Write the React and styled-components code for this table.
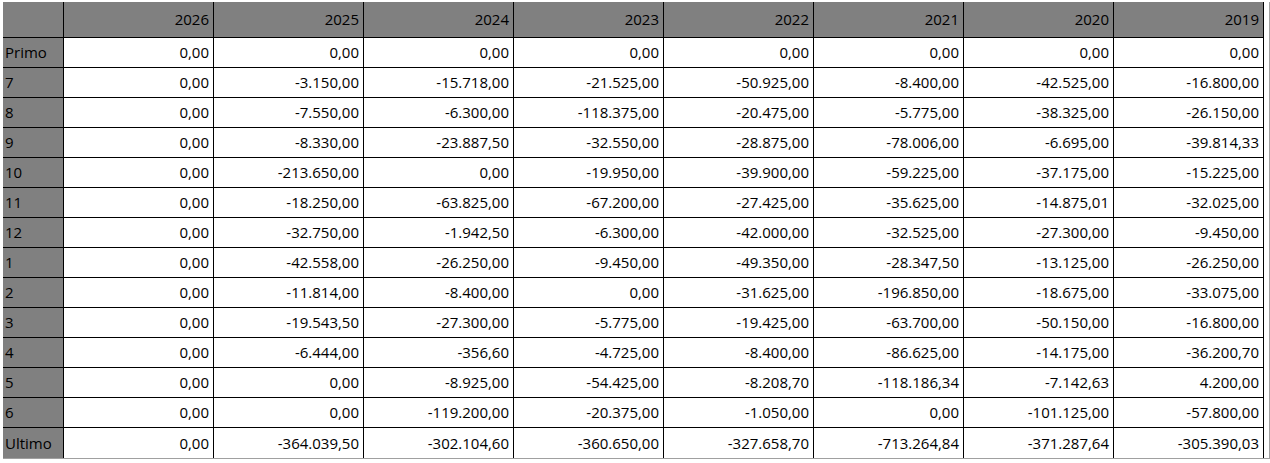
import React from "react";
import styled, { createGlobalStyle } from "styled-components";

const GlobalStyle = createGlobalStyle`
  html, body {
    margin: 0;
    padding: 0;
    background: #ffffff;
  }
  body {
    font-family: "Open Sans", "Liberation Sans", sans-serif;
  }
`;

const Frame = styled.div`
  box-sizing: content-box;
  margin: 2px 0 0 3px;
  width: 1266px;
  border-right: 1px solid #a0a0a0;
  border-bottom: 1px solid #a0a0a0;
`;

const Sheet = styled.div`
  display: grid;
  grid-template-columns: 61px repeat(8, 150px);
  grid-template-rows: 36px;
  grid-auto-rows: 30px;
  width: 1261px;
`;

const Row = styled.div`
  display: contents;
`;

const Cell = styled.div`
  box-sizing: border-box;
  display: flex;
  align-items: center;
  justify-content: ${(p) => (p.$label ? "flex-start" : "flex-end")};
  padding: ${(p) => (p.$label ? "0 0 0 2px" : "0 4px 0 0")};
  background: ${(p) => (p.$grey ? "#808080" : "#ffffff")};
  border-right: 1px solid #000000;
  border-bottom: ${(p) => (p.$last ? "none" : "1px solid #000000")};
  color: #000000;
  font-size: 15px;
  line-height: 1;
  white-space: nowrap;
`;

const years = ["2026", "2025", "2024", "2023", "2022", "2021", "2020", "2019"];

const rows = [
  ["Primo", "0,00", "0,00", "0,00", "0,00", "0,00", "0,00", "0,00", "0,00"],
  ["7", "0,00", "-3.150,00", "-15.718,00", "-21.525,00", "-50.925,00", "-8.400,00", "-42.525,00", "-16.800,00"],
  ["8", "0,00", "-7.550,00", "-6.300,00", "-118.375,00", "-20.475,00", "-5.775,00", "-38.325,00", "-26.150,00"],
  ["9", "0,00", "-8.330,00", "-23.887,50", "-32.550,00", "-28.875,00", "-78.006,00", "-6.695,00", "-39.814,33"],
  ["10", "0,00", "-213.650,00", "0,00", "-19.950,00", "-39.900,00", "-59.225,00", "-37.175,00", "-15.225,00"],
  ["11", "0,00", "-18.250,00", "-63.825,00", "-67.200,00", "-27.425,00", "-35.625,00", "-14.875,01", "-32.025,00"],
  ["12", "0,00", "-32.750,00", "-1.942,50", "-6.300,00", "-42.000,00", "-32.525,00", "-27.300,00", "-9.450,00"],
  ["1", "0,00", "-42.558,00", "-26.250,00", "-9.450,00", "-49.350,00", "-28.347,50", "-13.125,00", "-26.250,00"],
  ["2", "0,00", "-11.814,00", "-8.400,00", "0,00", "-31.625,00", "-196.850,00", "-18.675,00", "-33.075,00"],
  ["3", "0,00", "-19.543,50", "-27.300,00", "-5.775,00", "-19.425,00", "-63.700,00", "-50.150,00", "-16.800,00"],
  ["4", "0,00", "-6.444,00", "-356,60", "-4.725,00", "-8.400,00", "-86.625,00", "-14.175,00", "-36.200,70"],
  ["5", "0,00", "0,00", "-8.925,00", "-54.425,00", "-8.208,70", "-118.186,34", "-7.142,63", "4.200,00"],
  ["6", "0,00", "0,00", "-119.200,00", "-20.375,00", "-1.050,00", "0,00", "-101.125,00", "-57.800,00"],
  ["Ultimo", "0,00", "-364.039,50", "-302.104,60", "-360.650,00", "-327.658,70", "-713.264,84", "-371.287,64", "-305.390,03"],
];

export default function App() {
  return (
    <>
      <GlobalStyle />
      <Frame>
        <Sheet>
          <Row>
            <Cell $grey $label />
            {years.map((y) => (
              <Cell key={y} $grey>
                {y}
              </Cell>
            ))}
          </Row>
          {rows.map((r, i) => {
            const last = i === rows.length - 1;
            return (
              <Row key={r[0]}>
                <Cell $grey $label $last={last}>
                  {r[0]}
                </Cell>
                {r.slice(1).map((v, j) => (
                  <Cell key={j} $last={last}>
                    {v}
                  </Cell>
                ))}
              </Row>
            );
          })}
        </Sheet>
      </Frame>
    </>
  );
}
